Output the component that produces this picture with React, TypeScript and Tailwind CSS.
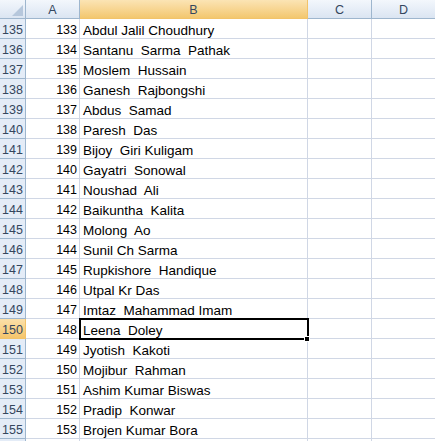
import React from "react";

const rows: [number, number, string][] = [
  [135, 133, "Abdul Jalil Choudhury"],
  [136, 134, "Santanu  Sarma  Pathak"],
  [137, 135, "Moslem  Hussain"],
  [138, 136, "Ganesh  Rajbongshi"],
  [139, 137, "Abdus  Samad"],
  [140, 138, "Paresh  Das"],
  [141, 139, "Bijoy  Giri Kuligam"],
  [142, 140, "Gayatri  Sonowal"],
  [143, 141, "Noushad  Ali"],
  [144, 142, "Baikuntha  Kalita"],
  [145, 143, "Molong  Ao"],
  [146, 144, "Sunil Ch Sarma"],
  [147, 145, "Rupkishore  Handique"],
  [148, 146, "Utpal Kr Das"],
  [149, 147, "Imtaz  Mahammad Imam"],
  [150, 148, "Leena  Doley"],
  [151, 149, "Jyotish  Kakoti"],
  [152, 150, "Mojibur  Rahman"],
  [153, 151, "Ashim Kumar Biswas"],
  [154, 152, "Pradip  Konwar"],
  [155, 153, "Brojen Kumar Bora"],
];

const SELECTED = 150;

const App = () => {
  return (
    <div
      className="w-[435px] h-[441px] overflow-hidden bg-white text-black"
      style={{ fontFamily: '"Liberation Sans", Arial, sans-serif' }}
    >
      {/* column headers */}
      <div className="grid grid-cols-[26px_54px_228px_64px_63px] h-[19px] text-[12.5px] text-[#34465e]">
        <div className="relative border-r border-b border-[#9eb6ce] bg-gradient-to-b from-[#f3f7fc] to-[#dbe5f2]">
          <svg className="absolute right-[2px] bottom-[2px]" width="11" height="11" viewBox="0 0 11 11">
            <polygon points="11,0 11,11 0,11" fill="#b6c7dc" />
          </svg>
        </div>
        <div className="flex items-end justify-center pb-[2px] leading-none border-r border-b border-[#9eb6ce] bg-gradient-to-b from-[#f3f7fc] to-[#dbe5f2]">
          A
        </div>
        <div className="flex items-end justify-center pb-[2px] leading-none border-r border-b border-[#f2c36a] bg-gradient-to-b from-[#fbe4b4] to-[#f3c76e]">
          B
        </div>
        <div className="flex items-end justify-center pb-[2px] leading-none border-r border-b border-[#9eb6ce] bg-gradient-to-b from-[#f3f7fc] to-[#dbe5f2]">
          C
        </div>
        <div className="flex items-end justify-center pb-[2px] leading-none border-b border-[#9eb6ce] bg-gradient-to-b from-[#f3f7fc] to-[#dbe5f2]">
          D
        </div>
      </div>

      {rows.map(([rowNo, num, name]) => {
        const sel = rowNo === SELECTED;
        return (
          <div key={rowNo} className="grid grid-cols-[26px_54px_228px_64px_63px] h-[20px]">
            <div
              className={
                sel
                  ? "flex items-end justify-center pb-[2px] leading-none text-[12.5px] text-[#34465e] border-r border-b border-[#f2c36a] bg-gradient-to-b from-[#fbe0a9] to-[#f5c56b]"
                  : "flex items-end justify-center pb-[2px] leading-none text-[12.5px] text-[#34465e] border-r border-b border-[#9eb6ce] bg-[#e4ecf7]"
              }
            >
              {rowNo}
            </div>
            <div className="flex items-end justify-end pr-[2px] pb-[2px] leading-none text-[12.5px] border-r border-b border-[#d0d7e5]">
              {num}
            </div>
            <div className="relative flex items-end pl-[3px] pb-[1px] leading-none text-[13.5px] whitespace-pre border-r border-b border-[#d0d7e5]">
              {name}
              {sel && (
                <>
                  <div className="absolute z-10 -left-px -top-px w-[230px] h-[22px] border-2 border-black" />
                  <div className="absolute z-20 left-[224px] top-[17px] w-[6px] h-[6px] bg-black border border-white" />
                </>
              )}
            </div>
            <div className="border-r border-b border-[#d0d7e5]" />
            <div className="border-b border-[#d0d7e5]" />
          </div>
        );
      })}

      {/* partial row below */}
      <div className="grid grid-cols-[26px_54px_228px_64px_63px] h-[20px]">
        <div className="border-r border-[#9eb6ce] bg-[#e4ecf7]" />
        <div className="border-r border-[#d0d7e5]" />
        <div className="border-r border-[#d0d7e5]" />
        <div className="border-r border-[#d0d7e5]" />
        <div />
      </div>
    </div>
  );
};

export default App;
